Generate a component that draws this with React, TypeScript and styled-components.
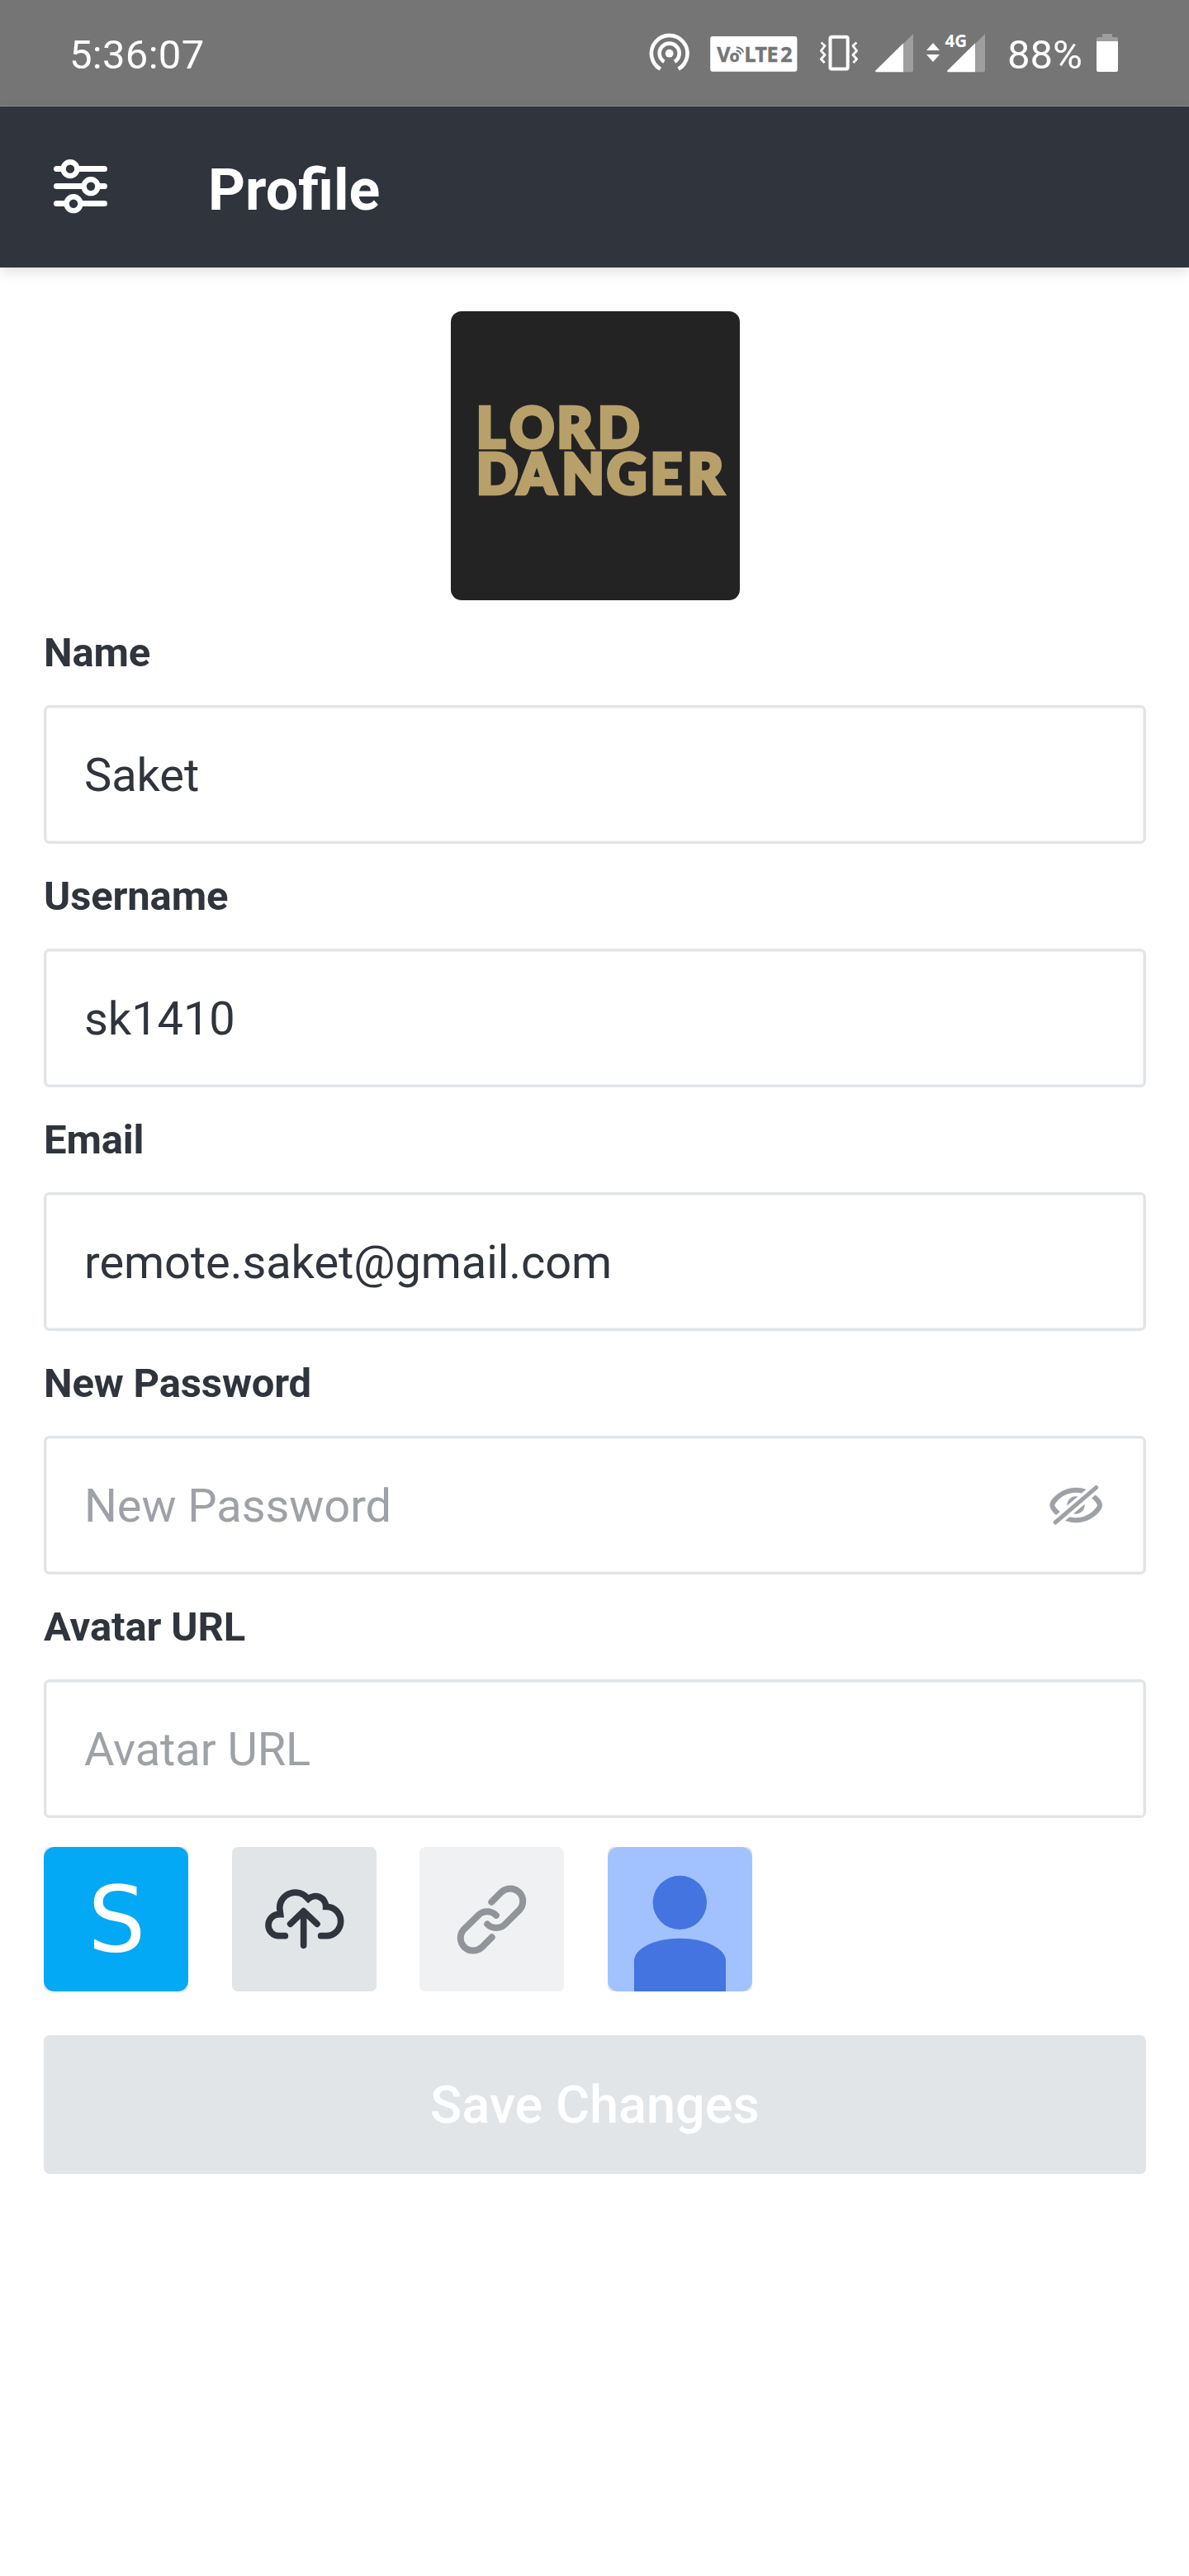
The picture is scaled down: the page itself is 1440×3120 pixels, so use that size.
import React from 'react';
import styled, { createGlobalStyle } from 'styled-components';

const GlobalStyle = createGlobalStyle`
  * { box-sizing: border-box; }
  body { margin: 0; background: #fff; }
`;

const Screen = styled.div`
  width: 1440px;
  min-height: 3120px;
  display: flex;
  flex-direction: column;
  background: #ffffff;
  font-family: Roboto, sans-serif;
  color: #2f343d;
`;

const StatusBar = styled.div`
  display: flex;
  align-items: flex-start;
  justify-content: space-between;
  height: 129px;
  padding: 0 86px 0 84px;
  background: #757575;
  border-bottom: 1px solid #8e9096;
  color: #fff;
`;

const Clock = styled.span`
  font-size: 49px;
  line-height: 133px;
  letter-spacing: 0.3px;
`;

const StatusIcons = styled.div`
  display: flex;
  align-items: flex-start;
`;

const StatusIcon = styled.svg<{ $gap?: number }>`
  display: block;
  flex: none;
  overflow: visible;
  margin-top: 38px;
  margin-right: ${(p) => p.$gap ?? 0}px;
`;

const BatteryLevel = styled.span`
  width: 108px;
  font-size: 49px;
  line-height: 133px;
`;

const Header = styled.header`
  display: flex;
  align-items: center;
  height: 195px;
  padding-left: 60px;
  background: #2f343d;
  box-shadow: 0 5px 15px rgba(0, 0, 0, 0.13);
`;

const Title = styled.h1`
  margin: 6px 0 0 117px;
  font-size: 70px;
  line-height: 82px;
  font-weight: 700;
  color: #fff;
`;

const Content = styled.main`
  display: flex;
  flex-direction: column;
  padding: 53px 52px 0 53px;
`;

const Avatar = styled.div`
  align-self: center;
  width: 350px;
  height: 350px;
  border-radius: 13px;
  background: #232323;
  overflow: hidden;
`;

const Field = styled.div`
  display: flex;
  flex-direction: column;
`;

const Label = styled.label`
  font-size: 49px;
  line-height: 127px;
  font-weight: 700;
  letter-spacing: -0.15px;
`;

const InputBox = styled.div<{ $placeholder?: boolean }>`
  display: flex;
  align-items: center;
  justify-content: space-between;
  height: 168px;
  padding: 2px 46px 0;
  border: 3px solid #e1e5e8;
  border-radius: 7px;
  box-shadow: inset 0 0 0 1px #f0f2f4;
  font-size: 56px;
  line-height: 66px;
  letter-spacing: -0.08px;
  color: ${(p) => (p.$placeholder ? '#9ea2a8' : '#2f343d')};
`;

const EyeIcon = styled.svg`
  display: block;
  margin-top: -2px;
`;

const Options = styled.div`
  display: flex;
  gap: 52.6px;
  margin-top: 35px;
`;

const Tile = styled.div<{ $dim?: boolean }>`
  width: 175px;
  height: 175px;
  border-radius: 7px;
  background: ${(p) => (p.$dim ? '#f0f1f3' : '#e1e5e8')};
`;

const Picture = styled.div<{ $color: string }>`
  display: flex;
  align-items: center;
  justify-content: center;
  width: 175px;
  height: 175px;
  border-radius: 13px;
  overflow: hidden;
  background: ${(p) => p.$color};
`;

const Initial = styled.span`
  padding: 1px 0 0 2px;
  color: #fff;
  font-family: 'DejaVu Sans', sans-serif;
  font-size: 110px;
  line-height: 172px;
`;

const SaveButton = styled.button`
  height: 168px;
  margin-top: 53px;
  padding: 1px 0 0;
  border: 0;
  border-radius: 7px;
  background: #e1e5e8;
  color: #fff;
  font-family: Roboto, sans-serif;
  font-size: 63px;
  font-weight: 500;
`;

const fields = [
  { label: 'Name', value: 'Saket' },
  { label: 'Username', value: 'sk1410' },
  { label: 'Email', value: 'remote.saket@gmail.com' },
  { label: 'New Password', secret: true },
  { label: 'Avatar URL' },
];

const Logo = () => (
  <svg
    width="350"
    height="350"
    viewBox="0 0 1050 1050"
    fill="#b8a06a"
    stroke="#b8a06a"
    strokeWidth="14"
    fontFamily="Lato, sans-serif"
    fontWeight="900"
    fontSize="197"
  >
    <text x="94 215 386 535" y="494">LORD</text>
    <text x="94 243 404 568 726 861" y="664">DANGER</text>
  </svg>
);

const HiddenEye = () => (
  <EyeIcon width="70" height="54" viewBox="141 226 210 162" fill="none">
    <mask id="slash" maskUnits="userSpaceOnUse" x="140" y="226" width="212" height="162">
      <rect x="140" y="226" width="212" height="162" fill="#fff" />
      <path d="M148 387L337 226" stroke="#000" strokeWidth="37" />
    </mask>
    <g mask="url(#slash)">
      <path
        d="M243 252C192 252 157 293 157 307C157 321 192 362 243 362C295 362 330 321 330 307C330 293 295 252 243 252Z"
        stroke="#9ea2a8"
        strokeWidth="18"
      />
      <circle cx="243" cy="307" r="32" fill="#9ea2a8" />
    </g>
    <path d="M168 370L317 243" stroke="#9ea2a8" strokeWidth="15" strokeLinecap="round" />
  </EyeIcon>
);

const MenuIcon = () => (
  <svg width="75" height="75" viewBox="60 189 75 75" fill="none" stroke="#fff" strokeLinecap="round">
    <path d="M68.5 204.6H126.5M68.5 225.6H126.5M68.5 246.6H126.5" strokeWidth="7" />
    <g fill="#2f343d" strokeWidth="6.4">
      <circle cx="85" cy="204.6" r="8.4" />
      <circle cx="110" cy="225.7" r="8.4" />
      <circle cx="89" cy="246.7" r="8.4" />
    </g>
  </svg>
);

const Signal = () => (
  <>
    <path d="M34 12L46 0V44.5Q46 46.3 44 46.3H34Z" fill="#9e9e9e" />
    <path d="M34 11.3V46.3H1.2Q-0.6 45.6 .4 44.4Z" fill="#fff" />
  </>
);

export default function App() {
  return (
    <Screen>
      <GlobalStyle />
      <StatusBar>
        <Clock>5:36:07</Clock>
        <StatusIcons>
          <StatusIcon width="52" height="52" viewBox="785 38 52 52" $gap={23} fill="none" stroke="#fff">
            <circle cx="810.7" cy="64.7" r="4.9" fill="#fff" stroke="none" />
            <path d="M799.8 83.6A21.8 21.8 0 1 1 821.6 83.6" strokeWidth="4.6" />
            <path d="M804.4 74.8A12 12 0 1 1 817 74.8" strokeWidth="4.6" />
          </StatusIcon>
          <StatusIcon width="106" height="52" viewBox="860 38 106 52" $gap={24} fontFamily="'Noto Sans', sans-serif" fontWeight="700">
            <rect x="860.2" y="44" width="105.2" height="42.7" rx="3" fill="#fff" />
            <g fill="#757575" stroke="#757575" strokeWidth=".5">
              <text x="868.3" y="75" fontSize="25">V</text>
              <text x="883.6" y="75" fontSize="19.5">o</text>
              <text x="901.5" y="75" fontSize="25" textLength="41">LTE</text>
              <text x="945.3" y="75" fontSize="25">2</text>
            </g>
            <g fill="none" stroke="#757575" strokeWidth="2">
              <path d="M891.5 61.6Q896 61.5 897.3 66" />
              <path d="M891.8 57.3Q899 58 900.3 63.5" />
            </g>
          </StatusIcon>
          <StatusIcon width="52" height="52" viewBox="990 38 52 52" $gap={18} fill="none" stroke="#fff">
            <rect x="1005.5" y="44.8" width="21.2" height="38.6" rx="2" strokeWidth="4" />
            <path d="M994.6 51.5L999 55.5L994.4 61.5L999 66.5L994.4 71.5L998.6 76M1037.4 51.5L1033 55.5L1037.6 61.5L1033 66.5L1037.6 71.5L1033.4 76" strokeWidth="2.8" strokeLinejoin="round" />
          </StatusIcon>
          <StatusIcon width="46" height="52" viewBox="0 -3 46 52" $gap={16}>
            <Signal />
          </StatusIcon>
          <StatusIcon width="71" height="52" viewBox="1122 38 71 52" $gap={27}>
            <path d="M1122 61L1130 52L1138 61ZM1122 66L1130 75L1138 66Z" fill="#fff" />
            <g transform="translate(1147 41)"><Signal /></g>
            <path d="M1144 40H1174V56L1170 58H1144Z" fill="#757575" />
            <text x="1144.6" y="56.5" fill="#fff" fontFamily="'Noto Sans', sans-serif" fontWeight="700" fontSize="20.5">4G</text>
          </StatusIcon>
          <BatteryLevel>88%</BatteryLevel>
          <StatusIcon width="26" height="52" viewBox="1328 38 26 52">
            <path d="M1335 41H1347V45H1352Q1354 45 1354 47V51H1328V47Q1328 45 1330 45H1335Z" fill="#9e9e9e" />
            <path d="M1328 50H1354V85Q1354 87 1352 87H1330Q1328 87 1328 85Z" fill="#fff" />
          </StatusIcon>
        </StatusIcons>
      </StatusBar>

      <Header>
        <MenuIcon />
        <Title>Profile</Title>
      </Header>

      <Content>
        <Avatar>
          <Logo />
        </Avatar>

        {fields.map((f) => (
          <Field key={f.label}>
            <Label>{f.label}</Label>
            <InputBox $placeholder={!f.value}>
              {f.value ?? f.label}
              {f.secret && <HiddenEye />}
            </InputBox>
          </Field>
        ))}

        <Options>
          <Tile>
            <Picture $color="#03a9f4">
              <Initial>S</Initial>
            </Picture>
          </Tile>
          <Tile>
            <svg width="175" height="175" viewBox="753 81 525 525" fill="none" stroke="#2f343d" strokeWidth="23" strokeLinecap="round">
              <path
                d="M946 404H923A38 39 0 0 1 923 326H929L926 302A57 56 0 0 1 1028 268L1030 270A38 38 0 0 1 1094 298H1096A52 53 0 0 1 1096 404H1076"
                strokeLinejoin="miter"
              />
              <path d="M1013 439V315M965 361L1013 314L1062 361" strokeLinejoin="round" />
            </svg>
          </Tile>
          <Tile $dim>
            <svg width="175" height="175" viewBox="54 81 525 525" fill="none" stroke="#919499" strokeWidth="24" strokeLinecap="round">
              <path d="M316 281L352.5 244.5A46 46 0 0 1 417.5 309.5L365.5 361.5A46 46 0 0 1 300.5 361.5" />
              <path d="M332.5 329.5A46 46 0 0 0 267.5 329.5L215.5 380.5A46 46 0 0 0 280.5 445.5L317 409" />
            </svg>
          </Tile>
          <Tile>
            <Picture $color="#a1c2ff">
              <svg width="175" height="175" viewBox="738 81 525 525" fill="#4474df">
                <circle cx="1000" cy="283" r="98" />
                <path d="M834 606V493C836 449 909 413 1000 413S1165 449 1167 493V606Z" />
              </svg>
            </Picture>
          </Tile>
        </Options>

        <SaveButton>Save Changes</SaveButton>
      </Content>
    </Screen>
  );
}
